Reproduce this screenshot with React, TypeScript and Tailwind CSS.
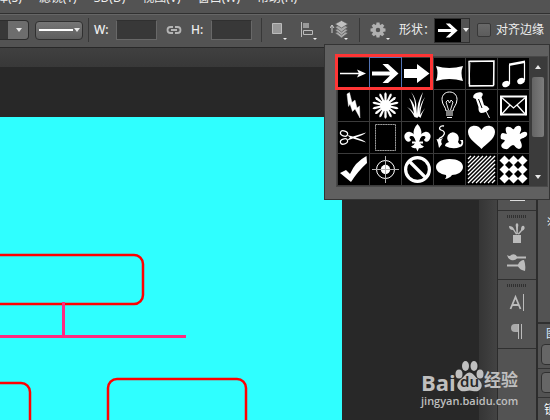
import type { ReactNode } from "react";

const menuItems = ["选择(S)", "滤镜(T)", "3D(D)", "视图(V)", "窗口(W)", "帮助(H)"];

const lilySide = "M14.500 20C13 15 11 14 9.500 14C7 14 7 16.500 9 17.500C8.500 20 6 20.500 4 18.500C0 14 4 9 8 10C12 11 14.500 15 15 20ZM13 21Q12 24 9 24.500Q11 27 14.500 26L15.500 21Z";

const shapes: { name: string; art: ReactNode }[] = [
  { name: "细箭头", art: <><path d="M2 15.500H24" strokeWidth="1.5" /><path d="M19 11.500L28 15.500 19 19.500 21 15.500Z" fill="currentColor" stroke="none" /></> },
  { name: "箭头", art: <path d="M2 13.500H20L12.500 6H18L28.500 15.500 18 25H12.500L20 17.500H2Z" fill="currentColor" stroke="none" /> },
  { name: "粗箭头", art: <path d="M2 11H15V6L27.500 15.500 15 25V20H2Z" fill="currentColor" stroke="none" /> },
  { name: "枕形", art: <path d="M2 8Q15 12 29 8 26 15 29 23 15 19 2 23 5 15 2 8Z" fill="currentColor" stroke="none" /> },
  { name: "边框", art: <><path d="M3 3.500L28 3 27.500 27.500 3.500 28Z" strokeWidth="1.400" /><path d="M3.500 3L27 3.500M27.500 4L28 27M27 28L3 27.500M3 26L4 5" strokeWidth="0.700" /></> },
  { name: "音符", art: <><path d="M11.500 26V7M26.500 4V22" strokeWidth="1.200" /><path d="M11 5.500L27 2.500V5L11 8Z" fill="currentColor" stroke="none" /><ellipse cx="8" cy="26" rx="3.900" ry="3" transform="rotate(-25 8 26)" fill="currentColor" stroke="none" /><ellipse cx="23" cy="23" rx="3.900" ry="3" transform="rotate(-25 23 23)" fill="currentColor" stroke="none" /></> },
  { name: "闪电", art: <path d="M9 4L11.500 2.500 14 12.500 17 10 19 18 21.500 16 22 28 17 19 14.500 21.500 12 14 10.500 16.500Z" fill="currentColor" strokeWidth=".4" /> },
  { name: "花", art: <><circle cx="15.500" cy="15.500" r="5.500" fill="currentColor" stroke="none" />{[0, 26, 51, 77, 103, 129, 154, 180, 206, 231, 257, 283, 309, 334].map((a) => <path key={a} d="M14.500 12L14.300 4Q15.500 .5 16.700 4L16.500 12Z" transform={`rotate(${a} 15.500 15.500)`} fill="currentColor" stroke="none" />)}</> },
  { name: "草", art: <path d="M12.500 27Q11 15 7 8 11 11 13 18 13.500 9 9 2 15 9 14.500 19L15 24Q15 12 21 2 17.500 12 17 22 18 14 23 7 19 15 18 25L23 18Q20 23 18.500 28 16 25 15.500 28ZM12.500 27Q9 20 5 17 11 20 13.500 27Z" fill="currentColor" stroke="none" /> },
  { name: "灯泡", art: <><path d="M12 21C12 17 8 15 8 9.500C8 5 11 2 15.500 2S23 5 23 9.500C23 15 19 17 19 21Z" strokeWidth="1" /><path d="M14.500 20L12 12 14 10 15.500 13 17 10 19 12 16.500 20" strokeWidth=".9" /><path d="M12 23H19M12 25H19M13 27.500H18" strokeWidth="1.200" /></> },
  { name: "图钉", art: <><ellipse cx="12" cy="5.500" rx="5" ry="3" transform="rotate(-20 12 5.500)" fill="currentColor" stroke="none" /><path d="M9.500 8L15.500 7 18 15Q22 16 23.500 19 20 23 15 23 12 22 12.500 17Z" fill="currentColor" stroke="none" /><path d="M20 21L23.500 28" strokeWidth="1" /><path d="M12.500 9L16 18" stroke="#000" strokeWidth="1" /></> },
  { name: "信封", art: <><path d="M3 6.500H28V24.500H3Z" strokeWidth="2" /><path d="M3 7L15.500 18 28 7M3 25L12 15M28 25L19 15" strokeWidth="1.300" /></> },
  { name: "剪刀", art: <><ellipse cx="6" cy="11.500" rx="3.700" ry="2.500" transform="rotate(20 6 11.500)" strokeWidth="1.200" /><ellipse cx="6" cy="19.500" rx="3.700" ry="2.500" transform="rotate(-20 6 19.500)" strokeWidth="1.200" /><path d="M9 13L15 14.500 28 10.500Q26 13 17.500 15.500 26 18 28 20.500L15 16.500 9 18.500 12 15.500Z" fill="currentColor" stroke="none" /></> },
  { name: "邮票", art: <><path d="M5.500 2.500H25.500V28.500H5.500Z" stroke="#555" strokeWidth="1" /><path d="M5.500 2.500H25.500V28.500H5.500Z" strokeDasharray="1.500 1" stroke="#999" strokeWidth="1" /></> },
  { name: "百合花", art: <g fill="currentColor" stroke="none"><path d="M15.500 2C22 9 19 14 17 20V26L15.500 29.500 14 26V20C12 14 9 9 15.500 2Z" /><path d={lilySide} /><path d={lilySide} transform="matrix(-1 0 0 1 31 0)" /><path d="M10 19.500H21V21.500H10Z" /></g> },
  { name: "涂鸦", art: <><path d="M10 4C6 3 4 7 7 8S12 11 9 14 5 15 5 18" strokeWidth="1.300" /><path d="M2.500 17Q5 18 9 16 6 19 8 22L5 26 4 21ZM11 24Q11 21 15 20 12 17 14 13 18 8 23 12 26 15 24 20 27 25 27.500 20L26 18H29Q30 24 26 25 19 28 11 24Z" fill="currentColor" stroke="none" /></> },
  { name: "心形", art: <path d="M15.500 27C11 22 2 17 2 10C2 2 13 2 15.500 8C18 2 29 2 29 10C29 17 20 22 15.500 27Z" fill="currentColor" stroke="none" /> },
  { name: "色块", art: <path d="M9 12C7 8 7 4 11 5 14 5 14 8 16 7 18 3 23 3 23 6 24 9 21 11 22 12 27 8 30 10 29 13 28 16 23 16 22 18 25 24 24 26 21 27 17 26 17 23 15 23 11 24 11 28 7 27 3 26 2 23 5 21 8 18 7 18 3 17 2 14 3 11 5 11Z" fill="currentColor" stroke="none" /> },
  { name: "勾", art: <path d="M2 19L8 16 12 20Q17 8 28.500 2L29 9Q20 17 13 28Z" fill="currentColor" stroke="none" /> },
  { name: "靶心", art: <><circle cx="15.500" cy="15.500" r="9" strokeWidth="1" /><circle cx="15.500" cy="15.500" r="4.700" fill="currentColor" stroke="none" /><path d="M2 15.500H29M15.500 2V29" strokeWidth="1" stroke="#b5b5b5" /></> },
  { name: "禁止", art: <><circle cx="15.500" cy="15.500" r="11.900" strokeWidth="3.200" /><path d="M7 7L24 24" strokeWidth="3.200" /></> },
  { name: "对话", art: <path d="M15.500 5C24 5 29 8 29 13S23 21 18 21Q16 24 11 25 13 23 12 21C6 20 2 17 2 13S7 5 15.500 5Z" fill="currentColor" stroke="none" /> },
  { name: "斜线", art: <>{[0, 4, 8, 12, 16, 20, 24].map((n) => <path key={n} d={`M2 ${5 + n}L${5 + n} 2`} strokeWidth="1.300" />)}{[4, 8, 12, 16, 20, 24].map((n) => <path key={n} d={`M${2 + n} 29L29 ${2 + n}`} strokeWidth="1.300" />)}</> },
  { name: "菱形", art: <>{[6.5, 15.5, 24.5].flatMap((y) => [6.5, 15.5, 24.5].map((x) => <path key={`${x}-${y}`} d={`M${x} ${y - 5}L${x + 5} ${y} ${x} ${y + 5} ${x - 5} ${y}Z`} fill="currentColor" stroke="none" />))}</> },
];

function ShapeArt({ children }: { children: ReactNode }) {
  return <svg viewBox="0 0 31 31" className="block size-full" fill="none" stroke="currentColor" strokeWidth="1.2" aria-hidden="true">{children}</svg>;
}

function Caret({ className }: { className: string }) {
  return <svg viewBox="0 0 6 4" className={`h-1 w-1.5 fill-[#e8e8e8] ${className}`} aria-hidden="true"><path d="M0 0H6L3 4Z" /></svg>;
}

function Divider() {
  return <div className="h-6 w-px shrink-0 bg-[#383838]" />;
}

function OptionsBar() {
  const box = "h-5 w-[41px] shrink-0 border border-[#686868] border-t-[#303030] bg-[#383838] px-1 text-white outline-none";
  const tool = "flex h-6 w-5 shrink-0 items-center justify-center";
  return (
    <div className="flex h-[34px] shrink-0 items-center border-t border-b border-t-[#666] border-b-[#282828] bg-[#535353] pb-0.5 text-xs text-[#eee]">
      <div className="relative h-5 w-[29px] shrink-0">
        <select aria-label="描边宽度" className="block h-5 w-full appearance-none rounded-r-sm border border-l-0 border-[#2d2d2d] bg-[linear-gradient(90deg,#383838_8px,#6d6d6d_8px)] outline-none" />
        <Caret className="pointer-events-none absolute top-2 right-[7px]" />
      </div>
      <button aria-label="描边类型" className="ml-1.5 flex h-[19px] w-12 shrink-0 items-center justify-between rounded-sm border border-[#303030] bg-linear-to-b from-[#767676] to-[#5e5e5e] pr-0.5 pl-[3px]">
        <span className="h-0.5 w-[34px] bg-white" /><Caret className="" />
      </button>
      <div className="ml-[5px]"><Divider /></div>
      <label htmlFor="shape-width" className="ml-[5px] w-[22px] shrink-0 font-medium">W:</label>
      <input id="shape-width" className={box} />
      <button aria-label="链接宽高" className="mx-[9px] flex h-5 w-4 shrink-0 items-center">
        <svg viewBox="0 0 16 10" className="w-4" fill="none" stroke="#b5b5b5" strokeWidth="1.8"><path d="M7 2H4.500A3 3 0 0 0 4.500 8H7M9 2H11.500A3 3 0 0 1 11.500 8H9M5 5H11" /></svg>
      </button>
      <label htmlFor="shape-height" className="w-5 shrink-0 font-medium">H:</label>
      <input id="shape-height" className={box} />
      <div className="ml-[9px]"><Divider /></div>
      <button aria-label="路径操作" className={`${tool} ml-2`}>
        <svg viewBox="0 0 20 24" className="w-5"><path d="M2.500 5.500H11.500V15.500H2.500Z" fill="#999" stroke="#bbb" /><path d="M13 20H17L15 22Z" fill="#eee" /></svg>
      </button>
      <button aria-label="路径对齐" className={`${tool} ml-2.5`}>
        <svg viewBox="0 0 20 24" className="w-5"><path d="M1.500 4V19" stroke="#bbb" /><path d="M3 5H9V10H3Z" fill="#999" /><path d="M3.500 12.500H12.500V16.500H3.500Z" fill="#555" stroke="#bbb" /><path d="M13 20H17L15 22Z" fill="#eee" /></svg>
      </button>
      <button aria-label="路径排列" className={`${tool} ml-2.5`}>
        <svg viewBox="0 0 20 24" className="w-5"><path d="M2 15V8M0 10L2 7 4 10" stroke="#ccc" fill="none" /><g fill="#aaa" stroke="#555" strokeWidth=".7"><path d="M5 15L11.500 12 18 15 11.500 20Z" /><path d="M5 12L11.500 9 18 12 11.500 17Z" /><path d="M5 9L11.500 6 18 9 11.500 14Z" /><path d="M5 6L11.500 2.500 18 6 11.500 10Z" fill="#c1c1c1" /></g><path d="M14 20H18L16 22Z" fill="#eee" /></svg>
      </button>
      <div className="ml-[9px]"><Divider /></div>
      <button aria-label="几何选项" className={`${tool} ml-2.5`}>
        <svg viewBox="0 0 20 24" className="w-5"><circle cx="8" cy="12" r="4" fill="none" stroke="#b0b0b0" strokeWidth="3.500" />{[0, 45, 90, 135, 180, 225, 270, 315].map((a) => <path key={a} d="M6.500 4.500H9.500L10 8H6Z" transform={`rotate(${a} 8 12)`} fill="#b0b0b0" />)}<path d="M16 20H20L18 22Z" fill="#eee" /></svg>
      </button>
      <span className="ml-[9px] w-[35px] shrink-0 whitespace-nowrap">形状：</span>
      <button aria-label="选择形状" className="flex h-[25px] w-9 shrink-0 items-center border border-[#303030] bg-[#535353]">
        <span className="flex h-[23px] w-[26px] items-center bg-black text-white"><ShapeArt>{shapes[1].art}</ShapeArt></span><Caret className="ml-0.5" />
      </button>
      <label className="ml-[7px] flex shrink-0 items-center gap-[5px] whitespace-nowrap">
        <input type="checkbox" className="size-3.5 appearance-none rounded-xs border border-[#383838] bg-linear-to-b from-[#696969] to-[#5c5c5c] checked:bg-[#aaa]" />对齐边缘
      </label>
    </div>
  );
}

function ShapePicker() {
  return (
    <section aria-label="形状选择" className="absolute top-11 right-0 flex h-[156px] w-[226px] border border-[#343434] bg-[#606060] pt-[11px] pl-[11px]">
      <div className="relative flex h-[131px] w-[212px] border border-[#484848] bg-[#3b3b3b] pt-px pl-px">
        <div className="grid h-[127px] shrink-0 grid-cols-6 gap-px">
          {shapes.map((s, i) => (
            <button key={s.name} aria-label={s.name} className={`size-[31px] bg-black text-white ${i === 1 ? "outline outline-[#5374b5]" : ""}`}><ShapeArt>{s.art}</ShapeArt></button>
          ))}
        </div>
        <div className="flex w-[18px] flex-col items-center justify-between py-[7px]">
          <Caret className="rotate-180" />
          <div className="mt-2 mb-auto h-[60px] w-3 rounded-xs bg-linear-to-r from-[#646464] to-[#7d7d7d]" />
          <Caret className="" />
        </div>
        <div className="pointer-events-none absolute -top-[3px] -left-0.5 h-9 w-[98px] border-3 border-[#ff3535]" />
      </div>
    </section>
  );
}

function Document() {
  return (
    <main className="flex min-w-0 flex-1 flex-col bg-[#282828]">
      <div className="h-[19px] shrink-0 bg-linear-to-b from-[#404040] to-[#383838]" />
      <div className="mt-[50px] mr-[137px] flex-1 overflow-hidden bg-[#2fffff]">
        <svg width="342" height="303" viewBox="0 117 342 303" fill="none" className="block" aria-label="流程图">
          <g stroke="#ff0000" strokeWidth="2.5"><rect x="-20" y="255" width="163" height="49" rx="9" /><rect x="-20" y="383" width="50" height="60" rx="9" /><rect x="108" y="379" width="138" height="60" rx="9" /></g>
          <path d="M63.500 302V336M0 336.500H186" stroke="#ff2a80" strokeWidth="3" />
        </svg>
      </div>
    </main>
  );
}

function Grip() {
  return <div className="h-[3px] w-5 shrink-0 bg-[repeating-linear-gradient(90deg,#303030_0_1px,#535353_1px_2px)]" />;
}

function Dock() {
  const group = "flex h-[69px] shrink-0 flex-col items-center border-b border-[#303030] pt-1";
  const icon = "flex h-[29px] w-6 shrink-0 items-center justify-center";
  return (
    <aside aria-label="面板" className="w-[40px] shrink-0 border-x border-[#2c2c2c] bg-[#535353]">
      <div className="flex h-[163px] flex-col items-center justify-end border-b border-[#303030] pb-[9px]"><div className="h-px w-[15px] bg-[#ddd]" /></div>
      <div className={group}><Grip />
        <button aria-label="画笔预设" className={icon}><svg viewBox="0 0 20 22" className="w-5" fill="#bbb"><path d="M6 13H14V21H6ZM9 12.500L6 8Q2 8 2 4 6 4 7 7L10 12ZM9.500 12L9 5Q8 2 10 1 12 2 11 5L10.800 12ZM10.500 12L14 8Q14 3 17 4 19 7 15 9L12 12.500Z" /></svg></button>
        <button aria-label="画笔" className={icon}><svg viewBox="0 0 22 20" className="w-[22px]" fill="#bbb"><path d="M1 3Q4 5 5 3 9 1 11 4.500H20V6.500H11Q9 9 5 8 2 7 1 3ZM1 12.500H12Q14 8 18 8 20 13 19 19 14 18 12 14.500H1Z" /></svg></button>
      </div>
      <div className={group}><Grip />
        <button aria-label="字符" className={icon}><svg viewBox="0 0 18 20" className="w-[18px]" fill="none" stroke="#bbb" strokeWidth="1.800"><path d="M2.500 17L7.500 5 12.500 17M4 13H11" /><path d="M15.500 2V19" strokeWidth="1" /></svg></button>
        <button aria-label="段落" className={icon}><svg viewBox="0 0 18 20" className="w-[18px]"><path d="M13 3H7A4 4 0 0 0 7 11H10V3" fill="#aaa" /><path d="M10.500 3V18M13.500 3V18" stroke="#bbb" strokeWidth="1" /></svg></button>
      </div>
    </aside>
  );
}

function LayersPanel() {
  return (
    <aside aria-label="图层" className="flex w-[13px] shrink-0 flex-col overflow-hidden border-l border-[#2c2c2c] bg-[#535353] text-xs text-white">
      <div className="flex h-[276px] shrink-0 flex-col justify-center border-b-2 border-[#303030]"><span className="pt-[73px] pl-[9px] text-xs">※</span></div>
      <div className="h-5 shrink-0 pt-0.5 pl-2 whitespace-nowrap text-[#d6eaff]">图层</div>
      <div className="h-[25px] shrink-0 border-b border-[#333] pl-[3px]"><button aria-label="类型" className="flex h-[21px] w-7 items-end rounded-sm border border-[#303030] bg-[#666] pb-1 pl-2"><span className="size-0.5 bg-[#bbb]" /></button></div>
      <div className="h-[29px] shrink-0 border-b border-[#333] pt-[3px] pl-[3px]"><button aria-label="混合模式" className="block h-[21px] w-7 rounded-sm border border-[#303030] bg-[#666]" /></div>
      <div className="pt-1 pl-1.5 whitespace-nowrap">锁定</div>
    </aside>
  );
}

function Watermark() {
  return (
    <div className="pointer-events-none absolute right-[30px] bottom-[11px] w-[99px] text-[#bfbfbf]">
      <div className="flex h-8 items-end">
        <span className="w-[34px] shrink-0 font-['Open_Sans',sans-serif] text-[22px] leading-5 font-bold">Bai</span>
        <div className="grid h-8 w-[29px] shrink-0">
          <svg viewBox="0 0 29 32" className="col-start-1 row-start-1 h-8 w-[29px]" fill="currentColor"><ellipse cx="4" cy="14" rx="3.500" ry="4.500" /><ellipse cx="10.500" cy="6" rx="3.500" ry="5" /><ellipse cx="19" cy="6" rx="3.500" ry="5" /><ellipse cx="25" cy="14" rx="3.500" ry="4.500" /><path d="M14.500 12.500C11 12.500 9 17 6 19C1 23 1 28 6 31C9 32 12 30.500 14.500 30.500S20 32 23 31C28 28 28 23 23 19C20 17 18 12.500 14.500 12.500Z" /></svg>
          <span className="col-start-1 row-start-1 self-end pb-[3px] text-center text-[15px] leading-4 font-semibold text-[#282828]">du</span>
        </div>
        <span className="text-[17px] leading-6 font-bold whitespace-nowrap">经验</span>
      </div>
      <div className="pt-px font-['Open_Sans',sans-serif] text-[11px] leading-4 font-semibold">jingyan.baidu.com</div>
    </div>
  );
}

export default function App() {
  return (
    <div className="relative flex h-screen w-full flex-col overflow-hidden bg-[#282828] font-['Noto_Sans','Noto_Sans_CJK_SC',sans-serif]">
      <nav aria-label="主菜单" className="flex h-3.5 shrink-0 items-end gap-[17px] overflow-hidden border-b border-[#303030] bg-[#535353] pb-[7px] text-xs leading-4 whitespace-nowrap text-[#eee]">
        {menuItems.map((item, i) => <button key={item} className={i === 0 ? "-ml-4" : ""}>{item}</button>)}
      </nav>
      <OptionsBar />
      <div className="flex min-h-0 flex-1">
        <Document />
        <div className="w-[18px] shrink-0 bg-linear-to-r from-[#353535] to-[#434343]" />
        <Dock />
        <LayersPanel />
      </div>
      <ShapePicker />
      <Watermark />
    </div>
  );
}
